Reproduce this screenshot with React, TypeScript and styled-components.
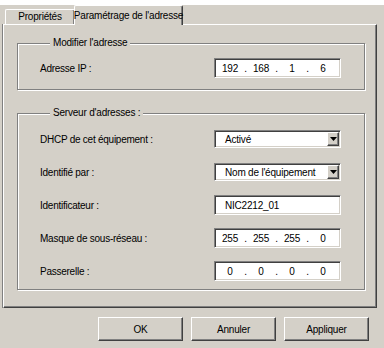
import React, { FC } from 'react';
import styled, { createGlobalStyle } from 'styled-components';

const GlobalStyle = createGlobalStyle`
  html, body {
    margin: 0;
    padding: 0;
    background: #d4d0c8;
  }
  body {
    font-family: 'Liberation Sans', Arial, sans-serif;
    font-size: 10px;
    color: #000;
  }
`;

const Window = styled.div`
  width: 384px;
  height: 348px;
  background: #d4d0c8;
  display: flex;
  flex-direction: column;
  box-sizing: border-box;
  overflow: hidden;
`;

const TopStrip = styled.div`
  height: 5px;
  background: #fff;
`;

const Body = styled.div`
  display: flex;
  flex-direction: column;
  padding: 0 7px 0 3px;
`;

const TabStrip = styled.div`
  height: 19px;
  display: flex;
  align-items: flex-end;
  padding-left: 2px;
  position: relative;
  z-index: 1;
`;

const Tab = styled.div<{ $active?: boolean; $width: number }>`
  box-sizing: border-box;
  width: ${(p) => p.$width}px;
  height: ${(p) => (p.$active ? 20 : 15)}px;
  margin-bottom: ${(p) => (p.$active ? -1 : 0)}px;
  margin-left: ${(p) => (p.$active ? -1 : 0)}px;
  display: flex;
  align-items: ${(p) => (p.$active ? 'center' : 'flex-start')};
  justify-content: center;
  padding-top: ${(p) => (p.$active ? 0 : 1)}px;
  background: #d4d0c8;
  border-top: 1px solid #fff;
  border-left: 1px solid #fff;
  border-right: 1px solid #404040;
  box-shadow: inset -1px 0 0 #808080;
  border-radius: 2px 2px 0 0;
  white-space: nowrap;
  letter-spacing: -0.2px;
`;

const Panel = styled.div`
  box-sizing: border-box;
  height: 284px;
  border-top: 1px solid #fff;
  border-left: 1px solid #fff;
  border-right: 1px solid #404040;
  border-bottom: 1px solid #404040;
  box-shadow: inset -1px -1px 0 #808080, -1px 0 0 #808080;
  padding: 12px 11px 0 13px;
  display: flex;
  flex-direction: column;
  gap: 17px;
`;

const Group = styled.fieldset<{ $pad: string }>`
  margin: 0;
  padding: ${(p) => p.$pad};
  border: 1px solid #808080;
  box-shadow: inset 1px 1px 0 #fff, 1px 1px 0 #fff;
  display: flex;
  flex-direction: column;
  gap: 13px;
`;

const Legend = styled.legend`
  margin-left: 10px;
  padding: 0 3px;
  line-height: 12px;
  background: #d4d0c8;
  letter-spacing: -0.2px;
`;

const Row = styled.div`
  height: 20px;
  display: flex;
  align-items: center;
  justify-content: space-between;
`;

const Label = styled.span`
  letter-spacing: -0.25px;
  white-space: nowrap;
`;

const Field = styled.div<{ $height?: number }>`
  box-sizing: border-box;
  width: 127px;
  height: ${(p) => p.$height ?? 20}px;
  background: #fff;
  border: 1px solid;
  border-color: #808080 #fff #fff #808080;
  box-shadow: inset 1px 1px 0 #404040, inset -1px -1px 0 #d4d0c8;
  display: flex;
  align-items: center;
  padding-left: 10px;
  letter-spacing: -0.2px;
  white-space: nowrap;
`;

const IpField = styled(Field)`
  padding-left: 6px;
`;

const Octet = styled.span`
  width: 18px;
  text-align: center;
`;

const Dot = styled.span`
  width: 13px;
  text-align: center;
`;

const Select = styled(Field)`
  padding: 1px 1px 1px 10px;
  justify-content: space-between;
`;

const SelectText = styled.span`
  flex: 1;
`;

const DropButton = styled.div`
  box-sizing: border-box;
  width: 12px;
  height: 100%;
  background: #d4d0c8;
  border-top: 1px solid #fff;
  border-left: 1px solid #fff;
  border-right: 1px solid #404040;
  border-bottom: 1px solid #404040;
  box-shadow: inset -1px -1px 0 #808080;
  display: flex;
  align-items: center;
  justify-content: center;
`;

const ButtonBar = styled.div`
  display: flex;
  justify-content: flex-end;
  gap: 8px;
  margin-top: 9px;
  padding-right: 8px;
`;

const Button = styled.div`
  box-sizing: border-box;
  width: 85px;
  height: 24px;
  display: flex;
  align-items: center;
  justify-content: center;
  background: #d4d0c8;
  border-top: 1px solid #fff;
  border-left: 1px solid #fff;
  border-right: 1px solid #404040;
  border-bottom: 1px solid #404040;
  box-shadow: inset -1px -1px 0 #808080;
  letter-spacing: -0.2px;
`;

const Arrow: FC = () => (
  <svg width="7" height="4" viewBox="0 0 7 4">
    <path d="M0 0h7L3.5 4z" fill="#000" />
  </svg>
);

const IpAddress: FC<{ parts: string[] }> = ({ parts }) => (
  <IpField>
    {parts.map((part, i) => (
      <React.Fragment key={i}>
        {i > 0 && <Dot>.</Dot>}
        <Octet>{part}</Octet>
      </React.Fragment>
    ))}
  </IpField>
);

const DropDown: FC<{ value: string }> = ({ value }) => (
  <Select $height={18}>
    <SelectText>{value}</SelectText>
    <DropButton>
      <Arrow />
    </DropButton>
  </Select>
);

const App: FC = () => {
  return (
    <Window>
      <GlobalStyle />
      <TopStrip />
      <Body>
        <TabStrip>
          <Tab $width={70}>Propriétés</Tab>
          <Tab $active $width={109}>Paramétrage de l'adresse</Tab>
        </TabStrip>
        <Panel>
          <Group $pad="9px 23px 11px 22px">
            <Legend>Modifier l'adresse</Legend>
            <Row>
              <Label>Adresse IP :</Label>
              <IpAddress parts={['192', '168', '1', '6']} />
            </Row>
          </Group>
          <Group $pad="10px 23px 8px 22px">
            <Legend>Serveur d'adresses :</Legend>
            <Row>
              <Label>DHCP de cet équipement :</Label>
              <DropDown value="Activé" />
            </Row>
            <Row>
              <Label>Identifié par :</Label>
              <DropDown value="Nom de l'équipement" />
            </Row>
            <Row>
              <Label>Identificateur :</Label>
              <Field>NIC2212_01</Field>
            </Row>
            <Row>
              <Label>Masque de sous-réseau :</Label>
              <IpAddress parts={['255', '255', '255', '0']} />
            </Row>
            <Row>
              <Label>Passerelle :</Label>
              <IpAddress parts={['0', '0', '0', '0']} />
            </Row>
          </Group>
        </Panel>
        <ButtonBar>
          <Button>OK</Button>
          <Button>Annuler</Button>
          <Button>Appliquer</Button>
        </ButtonBar>
      </Body>
    </Window>
  );
};

export default App;
